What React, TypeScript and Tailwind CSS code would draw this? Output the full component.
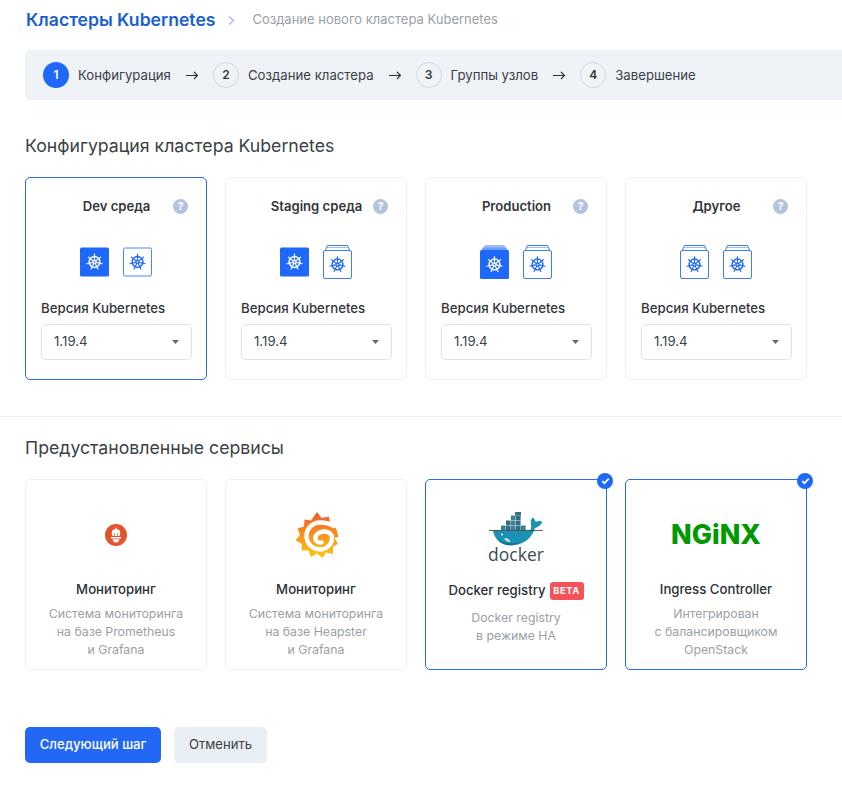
const steps = ['Конфигурация', 'Создание кластера', 'Группы узлов', 'Завершение']

type IconKind = 'solid' | 'outline' | 'solid-stack' | 'outline-stack'

const envs: { title: string; icons: IconKind[] }[] = [
  { title: 'Dev среда', icons: ['solid', 'outline'] },
  { title: 'Staging среда', icons: ['solid', 'outline-stack'] },
  { title: 'Production', icons: ['solid-stack', 'outline-stack'] },
  { title: 'Другое', icons: ['outline-stack', 'outline-stack'] },
]

function Helm({ x, y, color }: { x: number; y: number; color: string }) {
  const spokes = [0, 1, 2, 3, 4, 5, 6].map((i) => {
    const a = (i * 2 * Math.PI) / 7 - Math.PI / 2
    return { c: Math.cos(a), s: Math.sin(a) }
  })
  return (
    <g transform={`translate(${x} ${y})`} stroke={color} fill="none" strokeLinecap="round">
      <circle r="5.4" strokeWidth="1.5" />
      <circle r="1.5" strokeWidth="1.1" />
      {spokes.map((p, i) => (
        <line key={i} x1={p.c * 1.5} y1={p.s * 1.5} x2={p.c * 7.8} y2={p.s * 7.8} strokeWidth="1.2" />
      ))}
    </g>
  )
}

function NodeIcon({ kind }: { kind: IconKind }) {
  if (kind === 'solid') {
    return (
      <svg width="29" height="30" viewBox="0 0 29 30">
        <rect x="0" y="0.5" width="29" height="29" rx="1.5" fill="#1f69fa" />
        <Helm x={14.5} y={15} color="#ffffff" />
      </svg>
    )
  }
  if (kind === 'outline') {
    return (
      <svg width="29" height="30" viewBox="0 0 29 30">
        <rect x="0.5" y="1" width="28" height="28" rx="1.5" fill="#fff" stroke="#4f86f5" />
        <Helm x={14.5} y={15} color="#1f69fa" />
      </svg>
    )
  }
  if (kind === 'solid-stack') {
    return (
      <svg width="29" height="34" viewBox="0 0 29 34">
        <path d="M3 3 L5 0 H24 L26 3 Z" fill="#9dbdfb" />
        <path d="M1 5.5 L3 2.5 H26 L28 5.5 Z" fill="#6f9ffa" />
        <rect x="0" y="5" width="29" height="29" rx="1.5" fill="#1f69fa" />
        <Helm x={14.5} y={19.5} color="#ffffff" />
      </svg>
    )
  }
  return (
    <svg width="29" height="34" viewBox="0 0 29 34">
      <path d="M2.5 5 L4.5 0.5 H24.5 L26.5 5" fill="none" stroke="#3f7bf5" />
      <path d="M4 2.5 H25" fill="none" stroke="#9dbdfb" />
      <rect x="0.5" y="5.5" width="28" height="28" rx="1.5" fill="#fff" stroke="#3f7bf5" />
      <Helm x={14.5} y={19.5} color="#1f69fa" />
    </svg>
  )
}

function Prometheus() {
  return (
    <svg className="mt-[2px]" width="22" height="22" viewBox="0 0 22 22">
      <circle cx="11" cy="11" r="11" fill="#e6522c" />
      <path
        d="M11 3 C11.3 4.5 12.5 5 13 6.5 C13.4 6 13.6 5.6 13.6 5 C15 6.5 15.6 8.5 15 10.5 L14.5 12 H7.5 L7 10.5 C6.4 8.5 7 6.5 8.4 5 C8.4 5.6 8.6 6 9 6.5 C9.5 5 10.7 4.5 11 3 Z"
        fill="#fff"
      />
      <path d="M9.4 12 V9 M12.6 12 V9" stroke="#e6522c" strokeWidth="0.7" />
      <rect x="6" y="13" width="10" height="1.5" fill="#fff" />
      <path d="M7.5 15.2 H14.5 C14.3 17.2 12.6 18.6 11 18.6 C9.4 18.6 7.7 17.2 7.5 15.2 Z" fill="#fff" />
    </svg>
  )
}

function Grafana() {
  return (
    <svg className="mt-[2px] ml-[2px]" width="45" height="48" viewBox="0 0 45 48">
      <defs>
        <linearGradient id="grafanaFill" x1="0" y1="0" x2="0" y2="1">
          <stop offset="0" stopColor="#f15a29" />
          <stop offset="0.5" stopColor="#f89420" />
          <stop offset="1" stopColor="#fdc70c" />
        </linearGradient>
      </defs>
      <path
        d="M22 1 L26.5 7 L34 5.5 L35 11.5 C39.5 13.5 42.5 19 43.5 26 L39.5 27 L43 33 L38 35.5 L38 43 L31 41.5 L27.5 47 L22 42.5 L16 46 L13.5 39.5 L6.5 39.5 L7 33 L0.5 29.5 L5 24 L2.5 17.5 L9 15.5 L9.5 8.5 L16 9.5 Z"
        fill="url(#grafanaFill)"
      />
      <path
        d="M38.5 15 C34 12 30 11.5 25 11.5 C17 11.5 11.5 18 11.5 25 C11.5 32.5 17.5 38.5 25 38.5 C32 38.5 37 33 37 27 C37 23 33 20 28.5 20.5 C23.5 21 20 24 20.5 28 C21 30.5 23.5 32 26.5 31.5"
        fill="none"
        stroke="#fff"
        strokeWidth="4.4"
        strokeLinecap="round"
      />
    </svg>
  )
}

function Docker() {
  const boxes = [
    [13, 13.5], [18, 13.5], [23, 13.5], [28, 13.5], [33, 13.5],
    [18, 8.5], [23, 8.5], [28, 8.5],
    [23, 3.5], [28, 3.5],
  ]
  return (
    <div className="mt-[4px] flex flex-col items-center">
      <svg width="56" height="36" viewBox="0 0 56 36">
        {boxes.map(([x, y], i) => (
          <rect key={i} x={x} y={y} width="4.6" height="4.6" fill={i % 2 ? '#2f6f80' : '#3b8196'} />
        ))}
        <rect x="27" y="0" width="6" height="3.5" fill="#3b6f7f" />
        <path
          d="M5 18.5 H42 C43 17.5 43.5 15 43 12 C42.5 9.5 43 7.5 44.5 5.5 C46 6.5 47.5 8 47.5 10 C49.5 8.8 52 8.5 54.5 9.8 C53 13.5 49.5 15.5 47 16 C44.5 25 36 33.5 23 33.5 C12 33.5 6 26 5 18.5 Z"
          fill="#1d91b4"
        />
        <path d="M9 26 C15 32 25 33 33 29.5 C27 34.5 14 35 9 26 Z" fill="#0f6f90" />
        <path d="M16 26.5 C19 25.5 21.5 27 22.5 30 C19.5 30 17.5 28.8 16 26.5 Z" fill="#cfe8ef" />
        <line x1="1" y1="18.5" x2="55" y2="18.5" stroke="#24424d" strokeWidth="0.8" />
        <circle cx="14" cy="22.5" r="0.9" fill="#fff" />
      </svg>
      <span className="-mt-[1px] font-['Open_Sans',sans-serif] text-[17.5px] leading-[14px] text-[#394d54]">docker</span>
    </div>
  )
}

function Nginx() {
  return (
    <span className="mt-[2px] text-[27px] leading-[30px] font-extrabold text-[#009900]">NGiNX</span>
  )
}

function CheckBadge() {
  return (
    <span className="absolute -top-[7px] -right-[7px] flex h-4 w-4 items-center justify-center rounded-full bg-[#1f69fa]">
      <svg width="9" height="8" viewBox="0 0 9 8">
        <path d="M1.2 4.2 L3.4 6.2 L7.8 1.6" fill="none" stroke="#fff" strokeWidth="1.8" />
      </svg>
    </span>
  )
}

function ServiceCard({
  logo,
  title,
  lines,
  selected,
  beta,
}: {
  logo: React.ReactNode
  title: string
  lines: string[]
  selected?: boolean
  beta?: boolean
}) {
  return (
    <div
      className={`relative flex h-[191px] w-[182px] flex-col items-center rounded-[5px] border pt-[9px] ${
        selected ? 'border-[#2a6be8]' : 'border-[#eff1f4]'
      }`}
    >
      {selected && <CheckBadge />}
      <div className="flex h-[90px] items-center justify-center">{logo}</div>
      {beta ? (
        <div className="flex h-[24px] items-center gap-1 text-[13.2px] font-medium text-[#2b2f36]">
          {title}
          <span className="flex h-[18px] w-[34px] items-center justify-center rounded-[3px] bg-[#f5535a] text-[9.5px] font-bold tracking-[0.5px] text-white">
            BETA
          </span>
        </div>
      ) : (
        <div className="h-5 text-[13.2px] leading-5 font-medium text-[#2b2f36]">{title}</div>
      )}
      <div className="mt-[6px] text-center text-[12.3px] leading-[18px] text-[#9b9fa6]">
        {lines.map((l) => (
          <div key={l}>{l}</div>
        ))}
      </div>
    </div>
  )
}

export default function App() {
  return (
    <div className="h-screen overflow-hidden bg-white pt-2 font-['Inter',sans-serif] text-[#33363b]">
      <div className="flex h-6 items-center pl-[26px]">
        <span className="text-[17.6px] font-semibold text-[#1a5fcf]">Кластеры Kubernetes</span>
        <svg className="mx-[12px]" width="9" height="11" viewBox="0 0 9 11">
          <path d="M2 1.5 L6.5 5.5 L2 9.5" fill="none" stroke="#b4c2dc" strokeWidth="1.6" />
        </svg>
        <span className="ml-[4px] text-[13px] text-[#9b9fa6]">Создание нового кластера Kubernetes</span>
      </div>

      <div className="mt-[18px] pl-[25px]">
        <div className="flex h-[50px] items-center rounded-l-[5px] bg-[#eff2f7] pl-[18px]">
          {steps.map((s, i) => (
            <div key={s} className="flex items-center">
              <span
                className={`flex h-[26px] w-[26px] items-center justify-center rounded-full text-xs font-semibold ${
                  i === 0 ? 'bg-[#1f69fa] text-white' : 'border border-[#d4d9e2] text-[#33363b]'
                }`}
              >
                {i + 1}
              </span>
              <span className="mt-[1px] ml-[9px] text-[13.2px] text-[#3b3f46]">{s}</span>
              {i < steps.length - 1 && (
                <svg className="mx-[15px]" width="12" height="9" viewBox="0 0 12 9">
                  <path d="M0 4.5 H11.5 M8 1 L11.5 4.5 L8 8" fill="none" stroke="#2b2f36" strokeWidth="1.1" />
                </svg>
              )}
            </div>
          ))}
        </div>
      </div>

      <section className="pl-[25px]">
        <h2 className="mt-[34px] text-[17.7px] leading-6 text-[#3b3f46]">Конфигурация кластера Kubernetes</h2>
        <div className="mt-[19px] flex gap-[18px]">
          {envs.map((env, i) => (
            <div
              key={env.title}
              className={`relative h-[203px] w-[182px] rounded-[5px] border pt-[18px] pr-[14px] pl-[15px] ${
                i === 0 ? 'border-[#2a6be8]' : 'border-[#eff1f4]'
              }`}
            >
              <div className="h-5 text-center text-[13.1px] leading-5 font-semibold text-[#33363b]">{env.title}</div>
              <span className="absolute top-[21px] right-[18px] flex h-[15px] w-[15px] items-center justify-center rounded-full bg-[#b4c2dc] text-[11px] font-bold text-white">
                ?
              </span>
              <div className="mt-[29px] flex h-[34px] items-center justify-center gap-[14px] pr-[1px]">
                {env.icons.map((k, j) => (
                  <NodeIcon key={j} kind={k} />
                ))}
              </div>
              <div className="mt-[19px] h-5 text-[13.25px] leading-5 font-medium text-[#33363b]">Версия Kubernetes</div>
              <button className="mt-[6px] flex h-9 w-full items-center justify-between rounded-[5px] border border-[#dfe2e7] pr-[12px] pl-3 text-[13.2px] text-[#3b3f46]">
                1.19.4
                <svg width="7" height="4" viewBox="0 0 7 4">
                  <path d="M0 0 H7 L3.5 4 Z" fill="#666a70" />
                </svg>
              </button>
            </div>
          ))}
        </div>
      </section>

      <div className="mt-9 border-t border-[#eff1f4]" />

      <section className="pl-[25px]">
        <h2 className="mt-[19px] text-[17.7px] leading-6 text-[#3b3f46]">Предустановленные сервисы</h2>
        <div className="mt-[19px] flex gap-[18px]">
          <ServiceCard
            logo={<Prometheus />}
            title="Мониторинг"
            lines={['Система мониторинга', 'на базе Prometheus', 'и Grafana']}
          />
          <ServiceCard
            logo={<Grafana />}
            title="Мониторинг"
            lines={['Система мониторинга', 'на базе Heapster', 'и Grafana']}
          />
          <ServiceCard
            logo={<Docker />}
            title="Docker registry"
            lines={['Docker registry', 'в режиме НА']}
            selected
            beta
          />
          <ServiceCard
            logo={<Nginx />}
            title="Ingress Controller"
            lines={['Интегрирован', 'с балансировщиком', 'OpenStack']}
            selected
          />
        </div>
        <div className="mt-[57px] flex gap-[13px]">
          <button className="h-9 w-[136px] rounded-[5px] bg-[#2368f5] text-[13.1px] font-medium text-white">
            Следующий шаг
          </button>
          <button className="h-9 w-[93px] rounded-[5px] bg-[#eaeef5] text-[13.1px] text-[#3b3f46]">Отменить</button>
        </div>
      </section>
    </div>
  )
}
